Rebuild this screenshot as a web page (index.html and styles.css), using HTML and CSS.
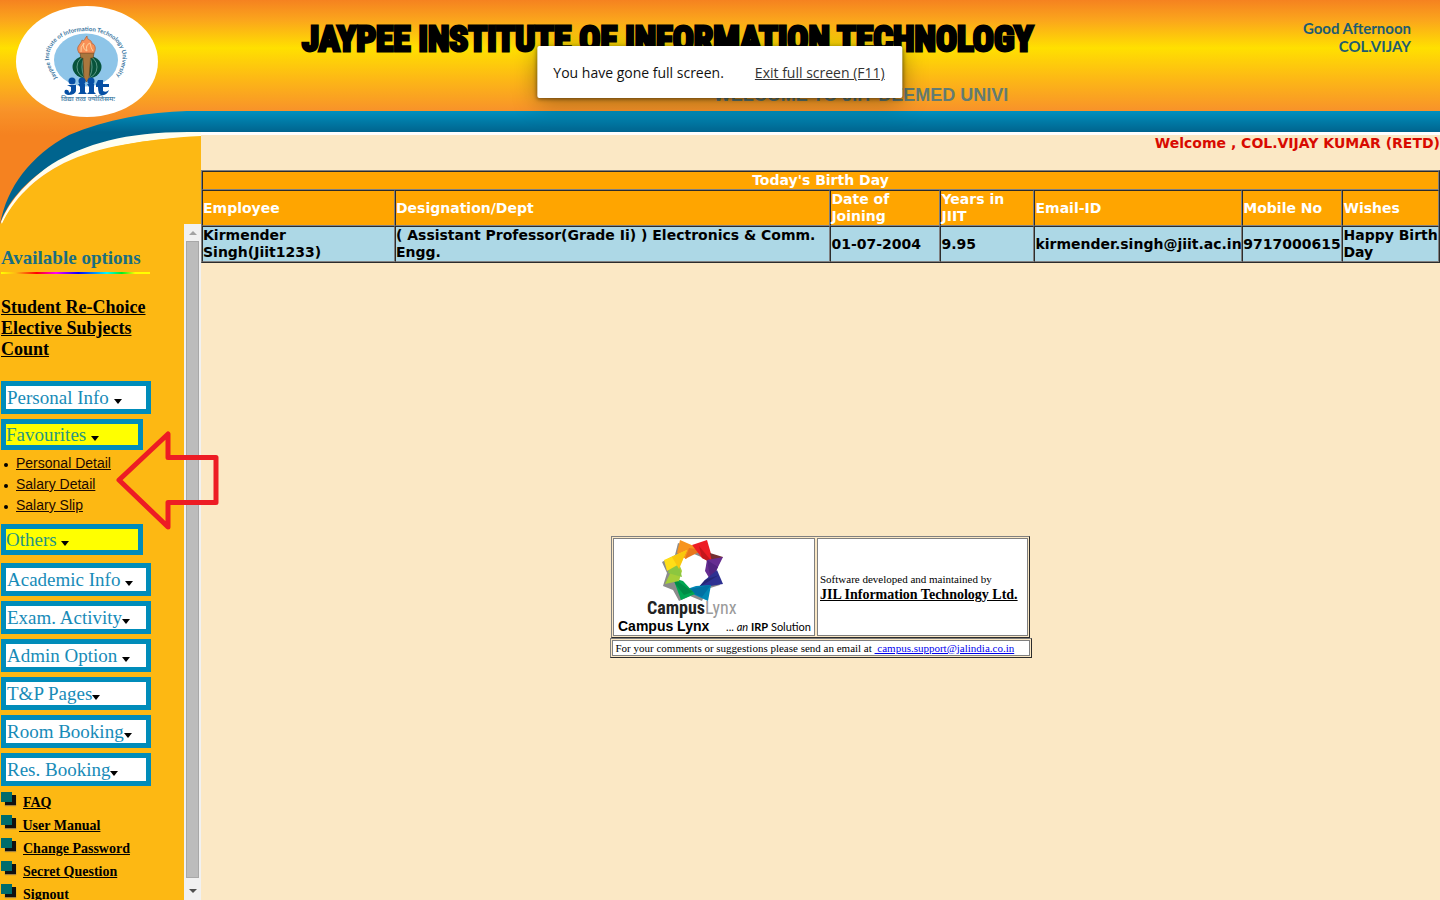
FILE: index.html
```html
<!DOCTYPE html>
<html lang="en">
<head>
<meta charset="utf-8">
<title>JIIT Campus Lynx</title>
<link rel="stylesheet" href="styles.css">
</head>
<body>
<header class="banner">
  <div class="banner-sky">
    <div class="banner-center">
      <h1 class="title">JAYPEE INSTITUTE OF INFORMATION TECHNOLOGY</h1>
      <p class="ticker">WELCOME TO JIIT DEEMED UNIVI</p>
    </div>
    <p class="greeting">Good Afternoon<br>COL.VIJAY</p>
  </div>
  <div class="banner-bar"></div>
</header>

<svg class="swoosh" width="201" height="224" viewBox="0 0 201 224" aria-hidden="true">
  <defs>
    <linearGradient id="bar" gradientUnits="userSpaceOnUse" x1="0" y1="111" x2="0" y2="132"><stop offset="0" stop-color="#0090be"/><stop offset="1" stop-color="#00648e"/></linearGradient>
    <linearGradient id="sky" gradientUnits="userSpaceOnUse" x1="0" y1="105" x2="0" y2="135"><stop offset="0" stop-color="#f8962a"/><stop offset="1" stop-color="#f58220"/></linearGradient>
  </defs>
  <path d="M0 111H201V136H160Q40 150 0 224Z" fill="url(#sky)"/>
  <path d="M0 224C7 187 30 156 69 135C106 119 149 112 187 111H201V133C130 133 85 146 52 165C25 181 7 203 0 224Z" fill="url(#bar)"/>
  <path d="M1 222C10 199 30 179 52 164C85 144 125 132 188 132H201V137C145 139 100 146 64 163C34 178 13 200 2 224Z" fill="#fffef0"/>
  <path d="M2 224C13 201 34 179 64 164C100 147 145 139 201 136V224Z" fill="#fdb813"/>
  <ellipse cx="87" cy="61.500" rx="71" ry="55.500" fill="#fff"/>
  <ellipse cx="86" cy="60" rx="32" ry="26.500" fill="#8ec5e8"/>
  <path id="ring" d="M58 78C36 52 58 31 86 31S136 52 113 80" fill="none"/>
  <text font-family="Lato, sans-serif" font-size="6" font-weight="700" fill="#3975a0"><textPath href="#ring">Jaypee Institute of Information Technology University</textPath></text>
  <ellipse cx="87" cy="67" rx="14.500" ry="11.500" fill="#07533b"/>
  <g fill="none" stroke="#7fb6a5" stroke-width=".7"><ellipse cx="87" cy="67" rx="10" ry="11"/><ellipse cx="87" cy="67" rx="5" ry="11"/></g>
  <path d="M80 53H94L93 58H90.500L89 79L86.500 82L84 79L83 58H81Z" fill="#a9773e" stroke="#65431f" stroke-width=".6"/>
  <path d="M79 53C75 46 81 45 82 40C85 42 84 39 87 36C87 41 92 39 92 44C94 43 97 48 94 53Z" fill="#f89057" stroke="#ae5d31" stroke-width=".7"/>
  <path d="M81 52Q80 47 84 43Q82 49 87 51Q85 45 90 43Q91 49 93 51" fill="none" stroke="#ffd09a"/>
  <g fill="#064fa4">
    <circle cx="72" cy="81" r="3.500"/><circle cx="82" cy="81" r="3.500"/><circle cx="91" cy="81" r="3.500"/>
    <path d="M67 85H76V91Q75 95 68 95Q63 94 65 90Q69 89 69 93L71 91V87Z"/>
    <path d="M78 84H85V92L87 94H78L80 92V87ZM87 84H94V92L96 94H87L89 92V87ZM98 80H103V84H109V87H103V91Q106 93 109 90Q107 96 101 95Q98 94 98 87H96V84Z"/>
  </g>
  <text x="61" y="101" font-family="Noto Sans Devanagari, Noto Sans, sans-serif" font-size="7" font-weight="600" fill="#4e85aa">विद्या तत्व ज्योतिसमः</text>
</svg>

<div class="columns">
  <aside class="side">
    <div class="side-cap"></div>
    <div class="side-frame">
      <nav class="menu">
        <h2 class="menu-title">Available options</h2>
        <div class="rainbow"></div>
        <a class="elective" href="#">Student Re-Choice Elective Subjects Count</a>
        <div class="group">
          <button class="item">Personal Info <i class="caret"></i></button>
          <button class="item item-hot">Favourites <i class="caret"></i></button>
        </div>
        <ul class="sub">
          <li><a href="#">Personal Detail</a></li>
          <li><a href="#">Salary Detail</a></li>
          <li><a href="#">Salary Slip</a></li>
        </ul>
        <button class="item item-hot">Others <i class="caret"></i></button>
        <div class="group group-main">
          <button class="item">Academic Info <i class="caret"></i></button>
          <button class="item">Exam. Activity<i class="caret"></i></button>
          <button class="item">Admin Option <i class="caret"></i></button>
          <button class="item">T&amp;P Pages<i class="caret"></i></button>
          <button class="item">Room Booking<i class="caret"></i></button>
          <button class="item">Res. Booking<i class="caret"></i></button>
        </div>
        <ul class="links">
          <li><i class="tile"></i><a href="#">FAQ</a></li>
          <li><i class="tile"></i><a class="wide-link" href="#">&nbsp;User Manual</a></li>
          <li><i class="tile"></i><a href="#">Change Password</a></li>
          <li><i class="tile"></i><a href="#">Secret Question</a></li>
          <li><i class="tile"></i><a href="#">Signout</a></li>
        </ul>
      </nav>
      <div class="scroll"><i class="up"></i><div class="thumb"></div><i class="down"></i></div>
    </div>
  </aside>

  <main class="main">
    <p class="welcome">Welcome , COL.VIJAY KUMAR (RETD)</p>
    <table class="births">
      <colgroup><col class="c-emp"><col class="c-des"><col class="c-join"><col class="c-years"><col class="c-mail"><col class="c-mob"><col class="c-wish"></colgroup>
      <thead>
        <tr><th class="caption" colspan="7">Today's Birth Day</th></tr>
        <tr><th>Employee</th><th>Designation/Dept</th><th>Date of Joining</th><th>Years in<br>JIIT</th><th>Email-ID</th><th>Mobile No</th><th>Wishes</th></tr>
      </thead>
      <tbody>
        <tr><td>Kirmender Singh(Jiit1233)</td><td>( Assistant Professor(Grade Ii) ) Electronics &amp; Comm. Engg.</td><td>01-07-2004</td><td>9.95</td><td>kirmender.singh@jiit.ac.in</td><td>9717000615</td><td>Happy Birth Day</td></tr>
      </tbody>
    </table>

    <footer class="credits">
      <div class="box">
        <div class="cell brand">
          <svg width="96" height="78" viewBox="0 0 96 78" role="img" aria-label="CampusLynx">
            <g transform="translate(2 0)">
            <path transform="translate(-2 2)" fill="#8b8b8b" fill-rule="evenodd" d="M32 1L45 6L59 1L63 14L75 18L69 30L74 43L61 47L56 59L44 54L33 59L27 48L17 44L21 31L16 20L29 13ZM48 12L36 16L30 30L34 43L48 48L60 43L64 30L60 17Z"/>
            <path fill="#f7941e" d="M32 0L55 10L42 14L38 19L29 13Z"/>
            <path fill="#e8761c" d="M41 8L55 10L37 19Z"/>
            <path fill="#ed1c24" d="M59 0L66 24L54 18L44 5Z"/>
            <path fill="#c4161c" d="M51 6L66 24L54 18Z"/>
            <path fill="#733032" d="M62 13L75 17L68 25L64 22Z"/>
            <path fill="#662d91" d="M75 17L63 41L57 31L59 20Z"/>
            <path fill="#522480" d="M59 20L70 27L63 41Z"/>
            <path fill="#2e3192" d="M69 30L75 44L50 48L57 40Z"/>
            <path fill="#252776" d="M57 40L71 35L50 48Z"/>
            <path fill="#0088b5" d="M60 61L36 50L48 46L63 45Z"/>
            <path fill="#0071a3" d="M36 50L63 45L54 57Z"/>
            <path fill="#00a651" d="M33 60L25 38L35 41L47 54Z"/>
            <path fill="#008c46" d="M28 45L25 38L45 52L36 55Z"/>
            <path fill="#a6ce39" d="M17 44L29 19L34 31L31 41Z"/>
            <path fill="#8cc63f" d="M22 26L29 19L34 37L20 33Z"/>
            <path fill="#ffde17" d="M16 20L39 10L33 23L19 31Z"/>
            <path fill="#f9c80e" d="M24 17L39 10L31 29Z"/>
            </g>
            <text x="1" y="74" class="mark"><tspan fill="#222">Campus</tspan><tspan fill="#9a9a9a" font-weight="400">Lynx</tspan></text>
          </svg>
          <p class="tagline"><b class="name">Campus Lynx</b><span>... <em>an</em> <b>IRP</b> Solution</span></p>
        </div>
        <div class="cell maker">
          <p>Software developed and maintained by</p>
          <a href="#">JIL Information Technology Ltd.</a>
        </div>
      </div>
      <div class="box box-contact">
        <p class="cell contact">For your comments or suggestions please send an email at <a href="#">&nbsp;campus.support@jalindia.co.in</a></p>
      </div>
    </footer>
  </main>
</div>

<svg class="pointer" width="106" height="102" viewBox="0 0 106 102" aria-hidden="true"><path d="M4 50L53 4V27.500H101V72.500H53V97Z" fill="none" stroke="#ed1c24" stroke-width="5" stroke-linejoin="round"/></svg>

<div class="notice" role="status"><span>You have gone full screen.</span><a href="#">Exit full screen (F11)</a></div>
</body>
</html>
```

FILE: styles.css
```css
* { box-sizing: border-box; }
body { margin: 0; height: 100vh; display: flex; flex-direction: column; overflow: hidden; position: relative; background: #fbe8c5; font-family: "Liberation Sans", Arial, sans-serif; }
h1, h2, p, ul { margin: 0; padding: 0; }
ul { list-style: none; }

.banner { border-bottom: 3px solid #fff; }
.banner-sky { height: 111px; display: flex; justify-content: space-between; padding: 16px 29px 0 302px; background: linear-gradient(#f58220, #fba51c 20px, #ffe000 48px, #fdb915 78px, #f8922a 111px); }
.banner-bar { height: 21px; background: linear-gradient(#0090be, #00648e); }
.title { font: bold 35px/48px Impact, "Roboto Condensed", "Liberation Sans", sans-serif; color: #000; white-space: nowrap; -webkit-text-stroke: 3px #000; }
.ticker { margin: 20px 25px 0 0; text-align: right; font-weight: bold; font-size: 18px; line-height: 22px; color: #637c72; }
.greeting { padding-top: 3px; text-align: right; font: bold 15px/18px "Comic Sans MS", Lato, sans-serif; color: #1f5c70; }
.swoosh { position: absolute; left: 0; top: 0; }

.columns { flex: 1; min-height: 0; display: flex; }
.side { width: 201px; flex: none; display: flex; flex-direction: column; }
.side-cap { height: 89px; flex: none; background: #fdb813; }
.side-frame { flex: 1; min-height: 0; display: flex; background: #fdb813; }
.menu { flex: 1; overflow: hidden; padding: 24px 0 0 1px; }
.menu-title { font: bold 19px/20px "Liberation Serif", serif; color: #1a6e80; }
.rainbow { width: 149px; height: 2px; margin-top: 4px; background: linear-gradient(90deg, #ff0, #fdb813 10%, red 24%, #f0f 37%, #00f 52%, #0ff 71%, #0e2 81%, #ff0 90%, #ff0); }
.elective { display: block; width: 152px; margin-top: 23px; font: bold 18px/21px "Liberation Serif", serif; color: #000; }
.group { display: flex; flex-direction: column; gap: 5px; margin-top: 21px; }
.item { display: block; width: 150px; height: 33px; padding: 0 0 0 1px; border: 5px solid #008cba; background: #fff; text-align: left; white-space: nowrap; font: 19px/22px Georgia, "Liberation Serif", serif; color: #178bb8; }
.item-hot { width: 142px; height: 31px; padding-left: 0; background: #ff0; line-height: 20px; color: #259680; }
.caret { display: inline-block; border: 4px solid transparent; border-top: 5px solid #000; border-bottom: 0; }
.sub { padding: 3px 0 8px; }
.sub li { display: flex; align-items: center; gap: 8px; padding-left: 3px; font-size: 14px; line-height: 21px; }
.sub li::before { content: ""; width: 4px; height: 4px; margin-top: 3px; border-radius: 50%; background: #000; }
.sub a { color: #1c0800; }
.group-main { margin-top: 8px; }
.links { margin-top: 5px; }
.links li { display: flex; align-items: flex-start; height: 23px; font: bold 14px/23px "Liberation Serif", serif; }
.links a { margin-left: 7px; color: #000; }
.links .wide-link { margin-left: 3px; }
.tile { width: 11px; height: 10px; margin: 1px 4px 0 0; background: #006c6c; box-shadow: 4px 3px 0 #111, 4px 4px 1px #a08040; }

.scroll { width: 17px; flex: none; display: flex; flex-direction: column; align-items: center; background: #f1f1f1; }
.thumb { flex: 1; width: 13px; background: #bcbcbc; border: 1px solid #a8a8a8; }
.up, .down { border: 4px solid transparent; }
.up { border-top: 0; border-bottom-color: #a3a3a3; margin: 7px 0 6px; }
.down { border-bottom: 0; border-top-color: #505050; margin: 11px 0 7px; }

.main { flex: 1; min-width: 0; }
.main, .births { font: bold 14px/17px Verdana, "DejaVu Sans", sans-serif; }
.welcome { padding-bottom: 18px; text-align: right; color: #d80a00; }
.births { width: 100%; table-layout: fixed; border: 1px solid; border-color: #808080 #2c2c2c #2c2c2c #808080; border-spacing: 0; }
.births th, .births td { padding: 0; text-align: left; border: 1px solid; border-color: #2c2c2c #808080 #808080 #2c2c2c; }
.births th { background: orange; color: #fff; }
.births .caption { text-align: center; }
.births td { background: #add8e6; color: #000; }
.c-emp { width: 15.6%; } .c-des { width: 35.2%; } .c-join { width: 8.9%; } .c-years { width: 7.6%; } .c-mail { width: 16.8%; } .c-mob { width: 8.1%; } .c-wish { width: 7.8%; }

.credits { display: flex; flex-direction: column; align-items: center; margin-top: 273px; font: 11px/14px "Liberation Serif", serif; }
.box { display: flex; gap: 2px; padding: 1px; border: 1px solid; border-color: #808080 #2c2c2c #2c2c2c #808080; }
.box-contact { width: 422px; }
.cell { background: #fff; border: 1px solid #808080; }
.brand { width: 202px; height: 98px; text-align: center; }
.brand svg { display: block; margin: 1px 0 0 32px; }
.mark { font: bold 18px "Roboto Condensed", "Liberation Sans", sans-serif; }
.tagline { display: flex; justify-content: space-between; align-items: baseline; padding: 0 3px 0 4px; font: 11px/16px "Comic Sans MS", Lato, sans-serif; }
.name { font: bold 14px/16px "Liberation Sans", sans-serif; }
.maker { width: 211px; padding: 0 2px; display: flex; flex-direction: column; justify-content: center; }
.maker a { font-size: 14px; line-height: 17px; font-weight: bold; color: #000; }
.contact { flex: 1; padding: 0 0 0 3px; white-space: nowrap; }
.contact a { color: #00e; }

.pointer { position: absolute; left: 115px; top: 430px; }
.notice { position: absolute; top: 46px; left: 50%; transform: translateX(-50%); display: flex; justify-content: space-between; gap: 31px; padding: 17px 18px 15px 16px; background: #fff; border-radius: 2px; box-shadow: 0 4px 24px rgba(0,0,0,.35), 0 1px 4px rgba(0,0,0,.5); font: 14px/20px "Open Sans", "Noto Sans", sans-serif; color: #111; white-space: nowrap; }
.notice a { color: #333; }
```
